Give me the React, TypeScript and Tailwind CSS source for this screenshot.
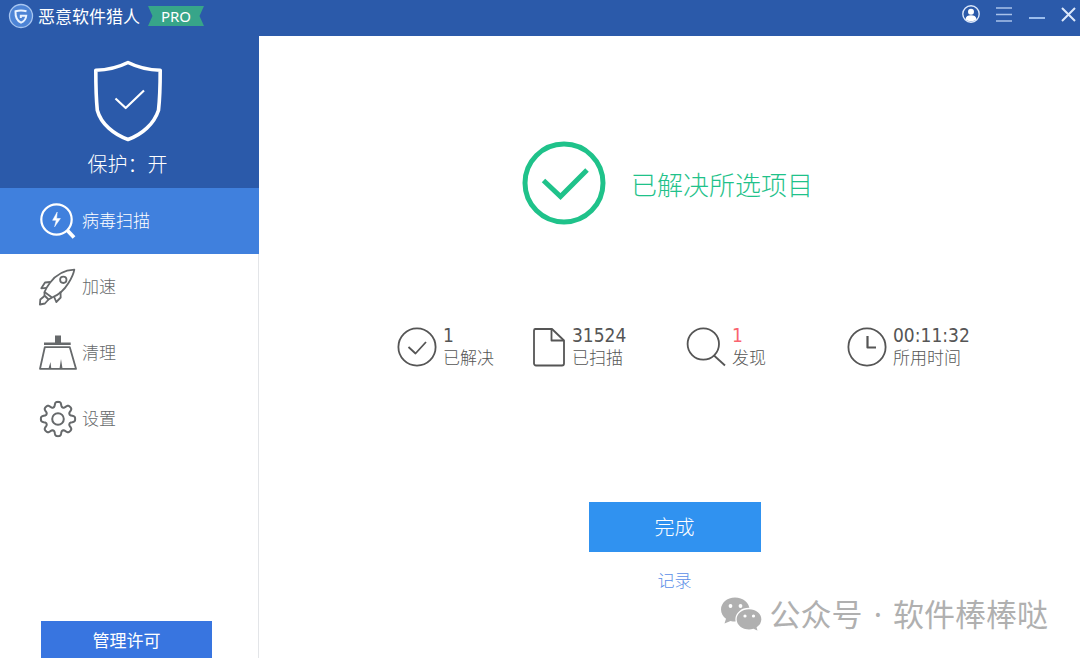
import type { ReactNode } from 'react';

type NavItem = {
    label: string;
    icon: ReactNode;
    active?: boolean;
};

type Stat = {
    value: string;
    label: string;
    icon: ReactNode;
    danger?: boolean;
};

// Outline of an eight-tooth gear around (19, 19)
const gearPath =
    Array.from({ length: 145 }, (_, i) => {
        const angle = (i / 144) * Math.PI * 2;
        const radius = 14.7 + 2.5 * Math.tanh(1.8 * Math.cos(angle * 8) + 0.3);
        const x = 19 + radius * Math.cos(angle);
        const y = 19 + radius * Math.sin(angle);

        return `${i ? 'L' : 'M'}${x.toFixed(2)} ${y.toFixed(2)}`;
    }).join('') + 'Z';

function Icon({
    width,
    height,
    stroke = 1.8,
    children,
}: {
    width: number;
    height: number;
    stroke?: number;
    children: ReactNode;
}) {
    return (
        <svg
            width={width}
            height={height}
            viewBox={`0 0 ${width} ${height}`}
            fill="none"
            stroke="currentColor"
            strokeWidth={stroke}
            strokeLinejoin="round"
            className="shrink-0"
            aria-hidden="true"
        >
            {children}
        </svg>
    );
}

const navItems: NavItem[] = [
    {
        label: '病毒扫描',
        active: true,
        icon: (
            <Icon width={38} height={38} stroke={2.2}>
                <circle cx="17.5" cy="17.5" r="15.2" />
                <path d="M28.5 28.5l6.5 7" strokeWidth="3.8" />
                <path
                    d="M18.2 10l-4.6 8.3h3.6l-1.6 6.5 5.8-8.3h-3.8z"
                    fill="currentColor"
                    strokeWidth="0.5"
                />
            </Icon>
        ),
    },
    {
        label: '加速',
        icon: (
            <Icon width={38} height={38} stroke={1.8}>
                <path d="M35.3 1.6C26 2 17.5 6 11 14.7 8.5 18 6.6 21 5.5 24l7.5 5.5C20 27 25.5 21.5 29.5 15 32.3 10.5 34.5 6.5 35.3 1.6z" />
                <circle cx="24.3" cy="11.8" r="3.2" />
                <path d="M11.5 14L6 14.5 2.3 20.3l5.2-.5" />
                <path d="M21.5 23.5l.2 6L17.3 34l-2.3-5.3" />
                <path d="M5.5 24v3.5l4 4 3.5-2" />
                <path d="M5.5 28L1.3 31.5.9 36.5l5-1 3.6-4" />
            </Icon>
        ),
    },
    {
        label: '清理',
        icon: (
            <Icon width={38} height={38} stroke={1.8}>
                <path
                    d="M16 1.5h6v7h9.7v2.5H5V8.5h11z"
                    fill="currentColor"
                    stroke="none"
                />
                <path d="M5.8 13.2h25L37 34.8H1z" />
                <path
                    d="M11.5 28l.8 6.5H9.5zM22 25l1.5 9.5h-3z"
                    fill="currentColor"
                    stroke="none"
                />
            </Icon>
        ),
    },
    {
        label: '设置',
        icon: (
            <Icon width={38} height={38} stroke={2}>
                <path d={gearPath} />
                <circle cx="19" cy="19" r="5.8" />
            </Icon>
        ),
    },
];

const stats: Stat[] = [
    {
        value: '1',
        label: '已解决',
        icon: (
            <Icon width={40} height={40}>
                <circle cx="20" cy="20" r="18.6" />
                <path d="M11.5 20l7 6.5L29 15" />
            </Icon>
        ),
    },
    {
        value: '31524',
        label: '已扫描',
        icon: (
            <Icon width={34} height={40}>
                <path d="M3 2h17l12 11.5v23a2 2 0 0 1-2 2H4a2 2 0 0 1-2-2V3.5A1.5 1.5 0 0 1 3.5 2z" />
                <path d="M19.5 2v11.5H32" />
            </Icon>
        ),
    },
    {
        value: '1',
        label: '发现',
        danger: true,
        icon: (
            <Icon width={40} height={40}>
                <circle cx="17.3" cy="17" r="15.7" />
                <path d="M28 28.5l11 10" />
            </Icon>
        ),
    },
    {
        value: '00:11:32',
        label: '所用时间',
        icon: (
            <Icon width={40} height={40}>
                <circle cx="20" cy="20" r="18.6" />
                <path d="M20.5 9v11.5H29" strokeWidth="2.2" />
            </Icon>
        ),
    },
];

function TitleBar() {
    return (
        <header className="flex h-9 items-center justify-between bg-[#2b5aaa] pb-1 pl-2 text-white">
            <div className="flex items-center">
                <svg width="26" height="26" viewBox="0 0 26 26" fill="none" aria-hidden="true">
                    <circle cx="13" cy="13" r="11.5" fill="#4d84d6" stroke="#a9c6f0" strokeWidth="1.3" />
                    <path
                        d="M18.5 8.2c-3.500-.8-7.500-.8-11 0-.2 5.300 1 9.300 5.500 11.500 3.500-1.600 5-4 5.200-7h-5.400v2.300"
                        stroke="#eaf3ff"
                        strokeWidth="2"
                    />
                </svg>
                <h1 className="ml-1 text-[17px] font-normal">恶意软件猎人</h1>
                <span className="ml-2 flex h-5 w-14 items-center justify-center bg-[#37a589] font-['Noto_Sans',sans-serif] text-[15px] [clip-path:polygon(0_0,100%_0,92%_50%,100%_100%,0_100%,8%_50%)]">
                    PRO
                </span>
            </div>

            <div className="flex items-center gap-[13px] pb-1">
                <button type="button" aria-label="账户" className="cursor-pointer">
                    <svg width="20" height="20" viewBox="0 0 20 20" aria-hidden="true">
                        <circle cx="10" cy="10" r="8.2" fill="none" stroke="#dce8fb" strokeWidth="1.4" />
                        <circle cx="10" cy="7.8" r="3" fill="#fff" />
                        <path d="M4.5 15.2c.5-3 2.5-3.9 5.5-3.9s5 .9 5.5 3.9c-3 2.7-8 2.7-11 0z" fill="#fff" />
                    </svg>
                </button>
                <button type="button" aria-label="菜单" className="cursor-pointer text-[#a9c2ea]">
                    <Icon width={20} height={20} stroke={1.6}>
                        <path d="M2 4h16M2 10.5h16M2 17h16" />
                    </Icon>
                </button>
                <button type="button" aria-label="最小化" className="cursor-pointer text-[#a9c9f5]">
                    <Icon width={20} height={20}>
                        <path d="M2 14h16" />
                    </Icon>
                </button>
                <button type="button" aria-label="关闭" className="cursor-pointer text-[#dce8fb]">
                    <Icon width={20} height={20} stroke={2}>
                        <path d="M2 4l13 13M15 4L2 17" />
                    </Icon>
                </button>
            </div>
        </header>
    );
}

function Sidebar() {
    return (
        <aside className="flex w-[259px] shrink-0 flex-col border-r border-[#e3e5e8]">
            <div className="-mr-px flex h-38 flex-col items-center bg-[#2b5aaa] pr-1 pt-6 text-white">
                <Icon width={70} height={82} stroke={3.6}>
                    <path d="M35 2.5C25 7.5 14 10 2.8 10.2c0 14 .2 27 1.5 40C8 64 21 74.5 35 79.5 49 74.5 61 64 65.5 50.2 67 37 67.2 24 67.2 10.2 56 10 45 7.5 35 2.5z" />
                    <path d="M22.5 38.5l10.2 9.5L51 30.5" strokeWidth="2.2" />
                </Icon>
                <p className="mt-2 text-xl font-light">保护：开</p>
            </div>

            <nav>
                <ul>
                    {navItems.map((item) => (
                        <li key={item.label}>
                            <a
                                href="#"
                                className={`-mr-px flex h-[66px] items-center gap-[5px] pl-[39px] text-[17px] font-light ${
                                    item.active
                                        ? 'bg-[#4080dd] text-white'
                                        : 'text-[#66696b]'
                                }`}
                            >
                                {item.icon}
                                <span className="pb-0.5">{item.label}</span>
                            </a>
                        </li>
                    ))}
                </ul>
            </nav>

            <button
                type="button"
                className="ml-[41px] mt-auto h-[37px] w-[171px] cursor-pointer bg-[#3875e0] text-[17px] text-white"
            >
                管理许可
            </button>
        </aside>
    );
}

function StatItem({ stat }: { stat: Stat }) {
    return (
        <li className="flex items-center gap-1.5 whitespace-nowrap text-[#555]">
            {stat.icon}
            <div className="pb-0.5">
                <p
                    className={`font-['DejaVu_Sans_Condensed','Noto_Sans',sans-serif] text-[19px] leading-[22px] ${
                        stat.danger ? 'text-[#fa6470]' : ''
                    }`}
                >
                    {stat.value}
                </p>
                <p className="text-[17px] font-light leading-[22px]">{stat.label}</p>
            </div>
        </li>
    );
}

export default function App() {
    return (
        <div className="relative flex min-h-screen flex-col bg-white font-['Noto_Sans_CJK_SC',sans-serif]">
            <TitleBar />

            <div className="flex flex-1">
                <Sidebar />

                <main className="flex flex-1 flex-col items-center pt-[105px]">
                    <div className="flex items-center gap-[25px] pr-1 text-[#1fc28a]">
                        <Icon width={84} height={84} stroke={5}>
                            <circle cx="42" cy="42" r="39" />
                            <path d="M21.5 39.5l17 16L65 29" strokeLinejoin="miter" />
                        </Icon>
                        <h2 className="text-[26px] font-light">已解决所选项目</h2>
                    </div>

                    <ul className="mt-[99px] grid w-full grid-cols-[135fr_154fr_161fr_126fr] pl-[138px] pr-[107px]">
                        {stats.map((stat) => (
                            <StatItem key={stat.label} stat={stat} />
                        ))}
                    </ul>

                    <div className="mt-33 flex flex-col items-center pl-2.5">
                        <button
                            type="button"
                            className="h-[50px] w-43 cursor-pointer bg-[#3092f0] text-xl font-light text-white"
                        >
                            完成
                        </button>
                        <a href="#" className="mt-[15px] text-[17px] font-light text-[#5b8fe8]">
                            记录
                        </a>
                    </div>
                </main>
            </div>

            <div className="pointer-events-none absolute bottom-6 right-8 flex items-center gap-1.5 text-[#b0b0b0]">
                <svg width="44" height="36" viewBox="0 0 44 36" fill="currentColor" aria-hidden="true">
                    <path d="M15 1.5C7 1.5 1 7 1 13.5c0 4 2 7 5 9.2L4.5 27.5l6-2.6c1.5.4 3 .6 4.5.6 8 0 14.5-5 14.5-12S23 1.5 15 1.5z" />
                    <path
                        d="M29 12.5c-7.5 0-13 4.800-13 10.8s5.5 10.8 13 10.8c1.5 0 3-.2 4.5-.7l5 2.4-1.2-4.3c3-2 4.7-4.9 4.7-8.2 0-6-5.5-10.8-13-10.8z"
                        stroke="#fff"
                        strokeWidth="1.3"
                    />
                    <g fill="#fff">
                        <circle cx="10.5" cy="10" r="1.9" />
                        <circle cx="20.5" cy="10" r="1.9" />
                        <circle cx="25" cy="20" r="1.6" />
                        <circle cx="33.5" cy="20" r="1.6" />
                    </g>
                </svg>
                <p className="font-['Noto_Sans','Noto_Sans_CJK_SC',sans-serif] text-[31px] leading-10">
                    公众号 <span className="px-[3px]">·</span> 软件棒棒哒
                </p>
            </div>
        </div>
    );
}
